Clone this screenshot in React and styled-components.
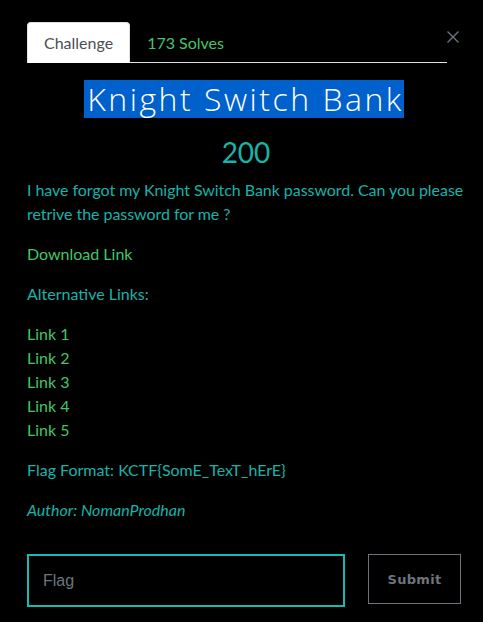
import React from 'react';
import styled, { createGlobalStyle } from 'styled-components';

const GlobalStyle = createGlobalStyle`
  html, body {
    margin: 0;
    padding: 0;
    background: #000;
  }
  body {
    font-family: Lato, "Open Sans", sans-serif;
    font-size: 16px;
    line-height: 24px;
  }
`;

const TEAL = '#18b3a9';
const GREEN = '#43c669';

const Modal = styled.div`
  position: relative;
  width: 483px;
  height: 622px;
  box-sizing: border-box;
  padding: 22px 18px 0 27px;
  background: #000;
  overflow: hidden;
`;

const Tabs = styled.div`
  display: flex;
  width: 420px;
  border-bottom: 1px solid #dee2e6;
`;

const Tab = styled.div`
  padding: 8px 16px;
  margin-bottom: -1px;
  border: 1px solid ${(p) => (p.$active ? '#dee2e6' : 'transparent')};
  border-bottom: none;
  border-radius: 4px 4px 0 0;
  background: ${(p) => (p.$active ? '#fff' : 'transparent')};
  color: ${(p) => (p.$active ? '#495057' : GREEN)};
  font-size: 16px;
  line-height: 24px;
`;

const Close = styled.button`
  position: absolute;
  top: 31px;
  right: 24px;
  width: 12px;
  height: 12px;
  padding: 0;
  border: none;
  background: transparent;
  cursor: pointer;
  display: flex;
`;

const Body = styled.div`
  display: flex;
  flex-direction: column;
`;

const Title = styled.h3`
  display: flex;
  justify-content: center;
  margin: 17px 0 0;
  padding-right: 4px;
`;

const Highlight = styled.span`
  display: block;
  background: #0060cc;
  padding: 0 0 0 3px;
  color: #fff;
  font-family: "Open Sans", sans-serif;
  font-weight: 300;
  font-size: 32px;
  line-height: 38px;
  letter-spacing: 2.5px;
`;

const Points = styled.h4`
  margin: 18px 0 0;
  text-align: center;
  font-weight: 400;
  font-size: 28px;
  line-height: 32px;
  color: ${TEAL};
`;

const Text = styled.p`
  margin: ${(p) => p.$top || 0}px 0 0;
  color: ${(p) => (p.$link ? GREEN : TEAL)};
  font-style: ${(p) => (p.$italic ? 'italic' : 'normal')};
  font-size: 16px;
  line-height: 24px;
  letter-spacing: ${(p) => (p.$tight ? '-0.05px' : 'normal')};
`;

const LinkList = styled.div`
  display: flex;
  flex-direction: column;
  margin-top: 16px;
`;

const Link = styled.a`
  color: ${GREEN};
  text-decoration: none;
  font-size: 16px;
  line-height: 24px;
`;

const Form = styled.form`
  display: flex;
  align-items: flex-start;
  gap: 23px;
  margin-top: 32px;
`;

const FlagInput = styled.input`
  width: 318px;
  height: 53px;
  box-sizing: border-box;
  padding: 0 14px;
  border: 2px solid #17b9b0;
  background: #000;
  color: #ddd;
  font-family: "Liberation Sans", Arial, sans-serif;
  font-size: 16px;
  outline: none;
  &::placeholder {
    color: #6c757d;
  }
`;

const SubmitButton = styled.button`
  width: 93px;
  height: 50px;
  box-sizing: border-box;
  border: 1px solid #6c757d;
  background: transparent;
  color: #6c757d;
  font-family: "DejaVu Sans", sans-serif;
  font-weight: 700;
  font-size: 13px;
  letter-spacing: 0.3px;
  cursor: pointer;
`;

export default function App() {
  return (
    <>
      <GlobalStyle />
      <Modal>
        <Tabs>
          <Tab $active>Challenge</Tab>
          <Tab>173 Solves</Tab>
        </Tabs>
        <Close aria-label="Close">
          <svg width="12" height="12" viewBox="0 0 12 12">
            <path d="M0.5 0.5 L11.5 11.5 M11.5 0.5 L0.5 11.5" stroke="#6c757d" strokeWidth="1.4" />
          </svg>
        </Close>
        <Body>
          <Title>
            <Highlight>Knight Switch Bank</Highlight>
          </Title>
          <Points>200</Points>
          <Text $top={10} $tight>
            I have forgot my Knight Switch Bank password. Can you please retrive the password for me ?
          </Text>
          <Text $top={16} $link>Download Link</Text>
          <Text $top={16}>Alternative Links:</Text>
          <LinkList>
            <Link href="#">Link 1</Link>
            <Link href="#">Link 2</Link>
            <Link href="#">Link 3</Link>
            <Link href="#">Link 4</Link>
            <Link href="#">Link 5</Link>
          </LinkList>
          <Text $top={16}>Flag Format: KCTF{'{'}SomE_TexT_hErE{'}'}</Text>
          <Text $top={16} $italic>Author: NomanProdhan</Text>
          <Form onSubmit={(e) => e.preventDefault()}>
            <FlagInput placeholder="Flag" />
            <SubmitButton type="submit">Submit</SubmitButton>
          </Form>
        </Body>
      </Modal>
    </>
  );
}
